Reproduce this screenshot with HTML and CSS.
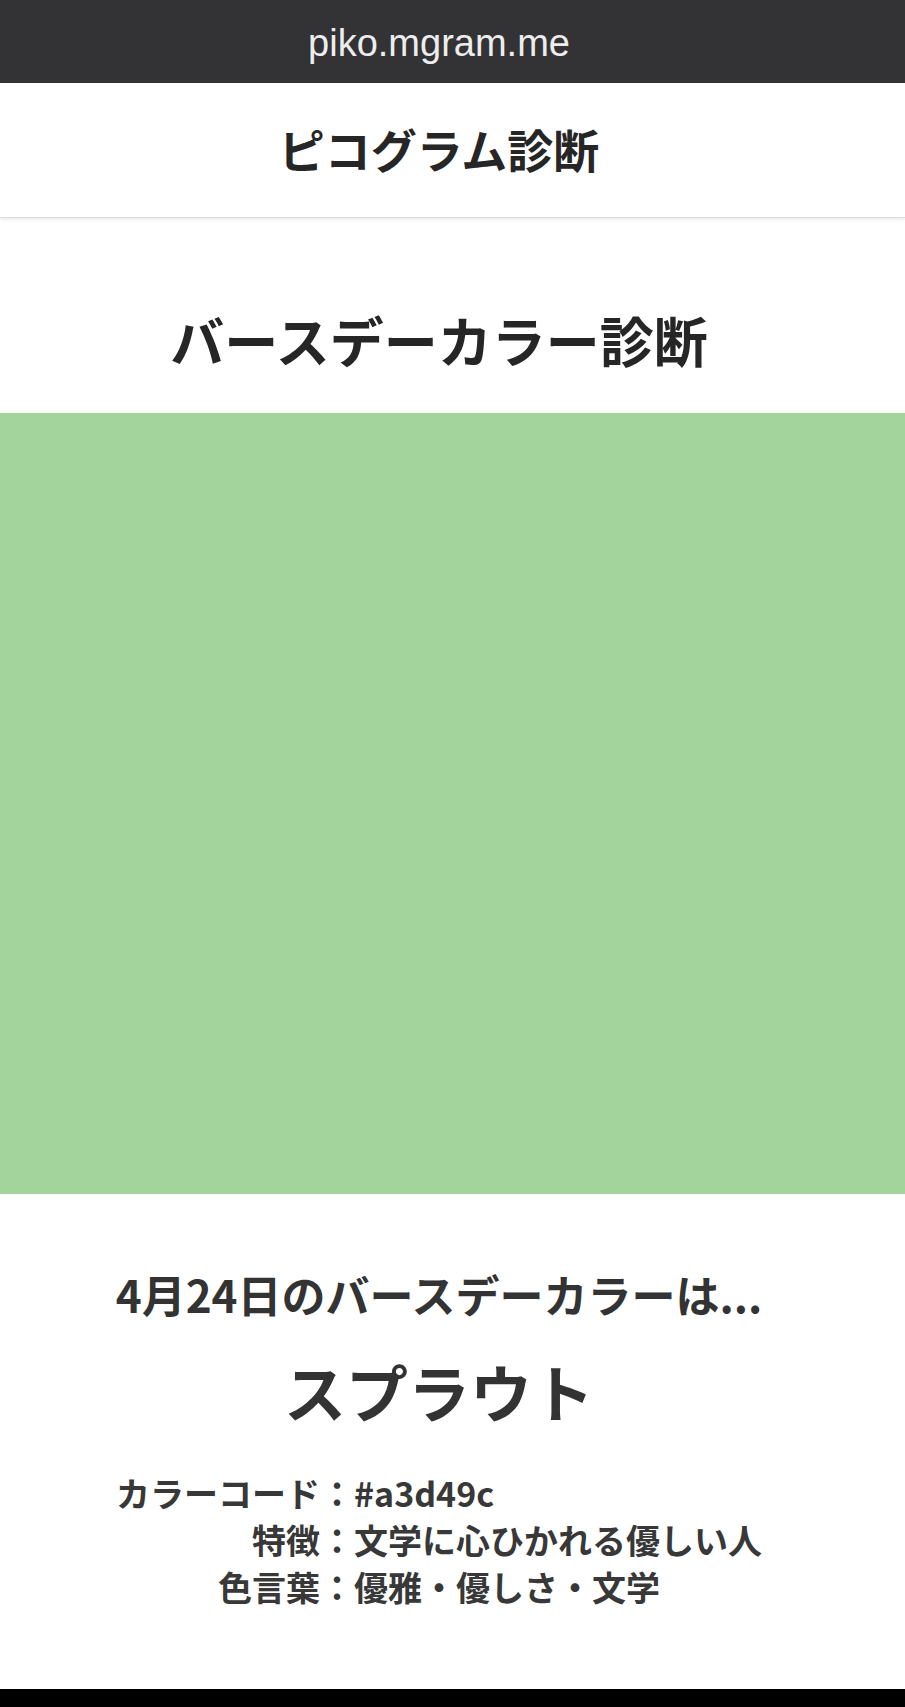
FILE: index.html
```html
<!DOCTYPE html>
<html lang="ja">
<head>
<meta charset="utf-8">
<title>バースデーカラー診断 | ピコグラム診断</title>
<link rel="stylesheet" href="styles.css">
</head>
<body>
  <div class="urlbar"><span class="url">piko.mgram.me</span></div>
  <header class="site-header">
    <h1 class="site-title">ピコグラム診断</h1>
  </header>
  <main class="main">
    <h2 class="page-title">バースデーカラー診断</h2>
    <div class="swatch" style="background-color:#a3d49c"></div>
    <section class="result">
      <p class="result-lead">4月24日のバースデーカラーは...</p>
      <p class="result-name">スプラウト</p>
      <dl class="details">
        <dt>カラーコード：</dt><dd class="code">#a3d49c</dd>
        <dt>特徴：</dt><dd>文学に心ひかれる優しい人</dd>
        <dt>色言葉：</dt><dd>優雅・優しさ・文学</dd>
      </dl>
    </section>
  </main>
  <div class="bottom-bar"></div>
</body>
</html>
```

FILE: styles.css
```css
html, body {
  margin: 0;
  padding: 0;
  background: #ffffff;
}

body {
  font-family: "Noto Sans CJK JP", "Noto Sans", sans-serif;
  color: #333333;
  width: 905px;
  min-height: 1707px;
  display: flex;
  flex-direction: column;
}

.urlbar {
  height: 83px;
  background: #333335;
  display: flex;
  align-items: center;
  justify-content: center;
  padding-right: 27px;
  box-sizing: border-box;
}

.url {
  font-family: "Liberation Sans", Arial, sans-serif;
  font-size: 38px;
  color: #ededed;
  line-height: 1;
  padding-top: 2px;
}

.site-header {
  height: 135px;
  box-sizing: border-box;
  border-bottom: 1px solid #dcdcdc;
  box-shadow: 0 2px 3px rgba(0, 0, 0, 0.07);
  display: flex;
  align-items: center;
  justify-content: center;
  padding-right: 27px;
  padding-bottom: 4px;
  position: relative;
  z-index: 1;
  background: #ffffff;
}

.site-title {
  margin: 0;
  font-size: 46px;
  font-weight: 700;
  line-height: 60px;
  color: #262626;
}

.main {
  flex: 1;
}

.page-title {
  margin: 0;
  padding: 82px 27px 33px 0;
  font-size: 54px;
  font-weight: 700;
  line-height: 80px;
  text-align: center;
  color: #262626;
}

.swatch {
  height: 781px;
  width: 100%;
}

.result {
  padding: 70px 27px 0 0;
  text-align: center;
}

.result-lead {
  margin: 0;
  font-size: 44px;
  font-weight: 700;
  line-height: 60px;
}

.result-name {
  margin: 27px 0 0;
  font-size: 62px;
  font-weight: 700;
  line-height: 80px;
}

.details {
  margin: 38px 0 0;
  display: grid;
  grid-template-columns: auto auto;
  justify-content: center;
  font-size: 34px;
  font-weight: 700;
  line-height: 47px;
  color: #383838;
}

.details dt {
  text-align: right;
  margin: 0;
}

.details dd {
  text-align: left;
  margin: 0;
}

.bottom-bar {
  height: 18px;
  background: #000000;
}
```
